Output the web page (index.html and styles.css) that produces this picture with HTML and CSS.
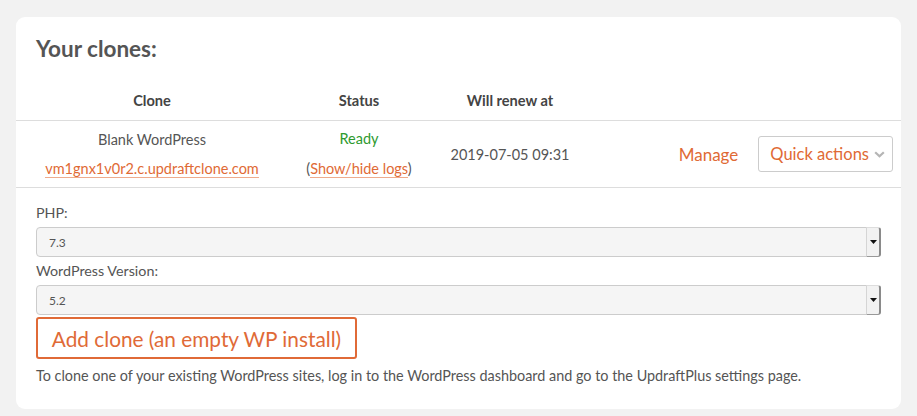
FILE: index.html
```html
<!DOCTYPE html>
<html>
<head>
<meta charset="utf-8">
<link rel="stylesheet" href="styles.css">
</head>
<body>
<div class="card">
  <h2 class="title">Your clones:</h2>
  <div class="table">
    <div class="row head">
      <div class="cell">Clone</div>
      <div class="cell">Status</div>
      <div class="cell">Will renew at</div>
      <div class="cell"></div>
    </div>
    <div class="row body">
      <div class="cell stack">
        <span>Blank WordPress</span>
        <a class="link">vm1gnx1v0r2.c.updraftclone.com</a>
      </div>
      <div class="cell stack">
        <span class="ready">Ready</span>
        <span>(<a class="link">Show/hide logs</a>)</span>
      </div>
      <div class="cell">2019-07-05 09:31</div>
      <div class="cell actions">
        <a class="manage">Manage</a>
        <div class="quick">Quick actions
          <svg class="chev" width="11" height="7" viewBox="0 0 11 7"><path d="M1.2 1.2 L5.5 5.3 L9.8 1.2" fill="none" stroke="#b5b5b5" stroke-width="2.2"/></svg>
        </div>
      </div>
    </div>
  </div>
  <div class="form">
    <label class="lbl">PHP:</label>
    <div class="select"><span class="val">7.3</span><span class="arrow"><svg width="7" height="4" viewBox="0 0 7 4"><path d="M0 0H7L3.5 4Z" fill="#111"/></svg></span></div>
    <label class="lbl">WordPress Version:</label>
    <div class="select"><span class="val">5.2</span><span class="arrow"><svg width="7" height="4" viewBox="0 0 7 4"><path d="M0 0H7L3.5 4Z" fill="#111"/></svg></span></div>
    <div class="btnwrap"><button class="add">Add clone (an empty WP install)</button></div>
    <p class="note">To clone one of your existing WordPress sites, log in to the WordPress dashboard and go to the UpdraftPlus settings page.</p>
  </div>
</div>
</body>
</html>
```
FILE: styles.css
```css
html, body { margin: 0; padding: 0; }
body {
  background: #f2f2f2;
  font-family: "Lato", "Open Sans", sans-serif;
  color: #555;
  padding: 17px 16px 0 16px;
  width: 885px;
}
.card {
  background: #fff;
  border-radius: 9px;
  height: 392px;
  box-sizing: border-box;
}
.title {
  margin: 0;
  padding: 19px 20px 0 20px;
  font-size: 22.5px;
  font-weight: 700;
  color: #555;
  line-height: 26px;
}
.table { margin-top: 31px; }
.row {
  display: grid;
  grid-template-columns: 272px 142px 160px 1fr;
  border-bottom: 1px solid #ddd;
}
.head { height: 27px; align-items: start; }
.head .cell { font-weight: 700; font-size: 14.6px; color: #444; text-align: center; line-height: 16px; }
.body { height: 66px; align-items: center; }
.cell { text-align: center; font-size: 14.5px; color: #555; }
.stack { display: flex; flex-direction: column; align-items: center; gap: 12px; line-height: 18px; }
.link { color: #df6a35; text-decoration: none; border-bottom: 1px solid #efab8c; line-height: 16px; }
.ready { color: #2e9a2e; }
.actions { display: flex; justify-content: flex-end; align-items: center; padding-right: 8px; gap: 20px; }
.manage { color: #df6a35; font-size: 17px; }
.quick {
  border: 1px solid #ccc;
  border-radius: 3px;
  height: 36px;
  box-sizing: border-box;
  padding: 0 7px 0 11px;
  display: flex;
  align-items: center;
  gap: 5px;
  color: #df6a35;
  font-size: 16.5px;
}
.form { padding: 16px 20px 0 20px; }
.lbl { display: block; font-size: 14.3px; color: #555; line-height: 18px; }
.select {
  margin: 5px 0 5px 0;
  width: 845px;
  height: 30px;
  box-sizing: border-box;
  background: #f5f5f5;
  border: 1px solid #ccc;
  border-radius: 4px;
  display: flex;
  justify-content: space-between;
  align-items: stretch;
  font-size: 12px;
  color: #555;
}
.val { padding-left: 12px; align-self: center; }
.arrow {
  width: 12px;
  margin: -1px -1px -1px 0;
  border-left: 1px solid #d5d5d5;
  border-right: 2px solid #8a8a8a;
  border-bottom: 1px solid #999;
  border-top: 1px solid #ddd;
  border-radius: 0 3px 3px 0;
  display: flex;
  align-items: center;
  justify-content: center;
  background: #f2f2f2;
}
.btnwrap { margin-top: -3px; display: flex; }
.add {
  font-family: inherit;
  background: #fff;
  border: 2px solid #e06a37;
  border-radius: 3px;
  color: #e06a37;
  font-size: 20.8px;
  height: 42px;
  width: 321px;
  padding: 0;
}
.note { margin: 8px 0 0 0; font-size: 14.4px; color: #555; line-height: 18px; }
```
